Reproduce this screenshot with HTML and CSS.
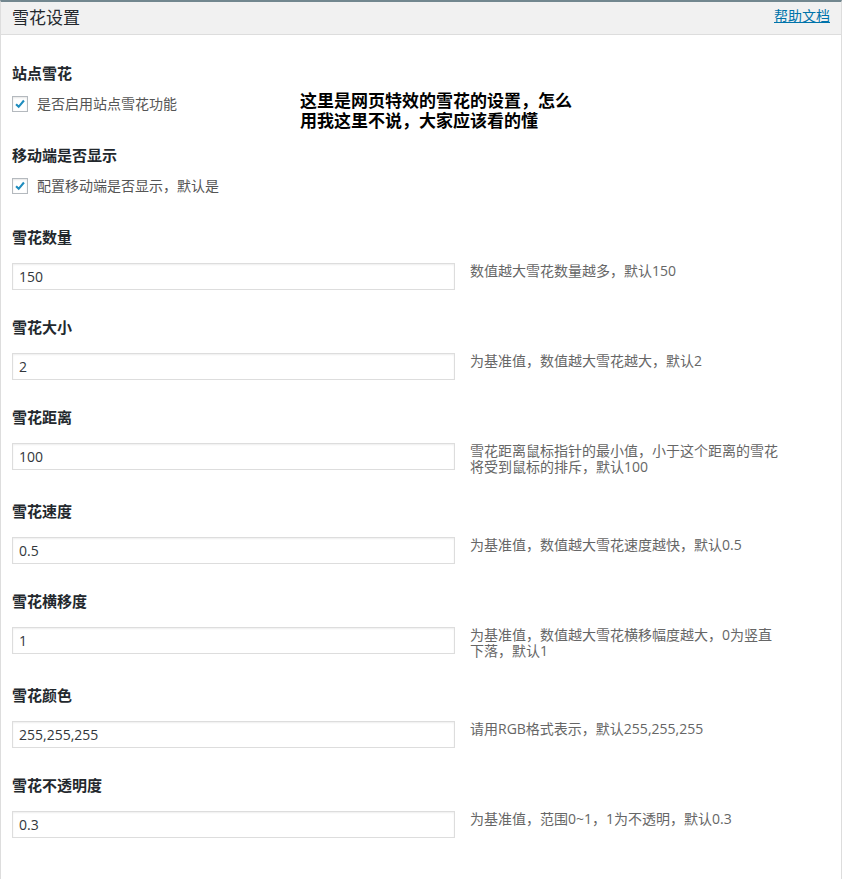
FILE: index.html
```html
<!DOCTYPE html>
<html lang="zh-CN">

<head>
    <meta charset="UTF-8" />
    <meta name="viewport" content="width=device-width, initial-scale=1.0" />
    <title>雪花设置</title>
    <link rel="stylesheet" href="styles.css">
</head>

<body>
    <div class="panel">
        <div class="panel_head">
            <h2 class="panel_title">雪花设置</h2>
            <a class="help_link" href="#">帮助文档</a>
        </div>
        <div class="panel_body">
            <div class="field check_field">
                <div class="field_label">站点雪花</div>
                <label class="check_row"><span class="check_box"><svg viewBox="0 0 16 16" width="14" height="14"><path d="M3.5 8.2 L6.5 11.2 L12.5 4" fill="none" stroke="#1e8cbe" stroke-width="2.4"/></svg></span>是否启用站点雪花功能</label>
            </div>
            <div class="field check_field">
                <div class="field_label">移动端是否显示</div>
                <label class="check_row"><span class="check_box"><svg viewBox="0 0 16 16" width="14" height="14"><path d="M3.5 8.2 L6.5 11.2 L12.5 4" fill="none" stroke="#1e8cbe" stroke-width="2.4"/></svg></span>配置移动端是否显示，默认是</label>
            </div>
            <div class="field">
                <div class="field_label">雪花数量</div>
                <div class="control">
                    <input class="text_input" type="text" value="150">
                    <p class="desc">数值越大雪花数量越多，默认150</p>
                </div>
            </div>
            <div class="field">
                <div class="field_label">雪花大小</div>
                <div class="control">
                    <input class="text_input" type="text" value="2">
                    <p class="desc">为基准值，数值越大雪花越大，默认2</p>
                </div>
            </div>
            <div class="field">
                <div class="field_label">雪花距离</div>
                <div class="control">
                    <input class="text_input" type="text" value="100">
                    <p class="desc">雪花距离鼠标指针的最小值，小于这个距离的雪花将受到鼠标的排斥，默认100</p>
                </div>
            </div>
            <div class="field">
                <div class="field_label">雪花速度</div>
                <div class="control">
                    <input class="text_input" type="text" value="0.5">
                    <p class="desc">为基准值，数值越大雪花速度越快，默认0.5</p>
                </div>
            </div>
            <div class="field">
                <div class="field_label">雪花横移度</div>
                <div class="control">
                    <input class="text_input" type="text" value="1">
                    <p class="desc">为基准值，数值越大雪花横移幅度越大，0为竖直下落，默认1</p>
                </div>
            </div>
            <div class="field">
                <div class="field_label">雪花颜色</div>
                <div class="control">
                    <input class="text_input" type="text" value="255,255,255">
                    <p class="desc">请用RGB格式表示，默认255,255,255</p>
                </div>
            </div>
            <div class="field">
                <div class="field_label">雪花不透明度</div>
                <div class="control">
                    <input class="text_input" type="text" value="0.3">
                    <p class="desc">为基准值，范围0~1，1为不透明，默认0.3</p>
                </div>
            </div>
        </div>
        <div class="note">这里是网页特效的雪花的设置，怎么<br>用我这里不说，大家应该看的懂</div>
    </div>
</body>

</html>
```

FILE: styles.css
```css
html,
body {
    padding: 0;
    margin: 0;
    background: #fff;
}

body {
    font-family: "Open Sans", "Noto Sans CJK SC", sans-serif;
    font-size: 14px;
    color: #444;
}

.panel {
    position: relative;
    width: 840px;
    border: 1px solid #ddd;
    border-top: 2px solid #72878f;
}

.panel_head {
    height: 32px;
    display: flex;
    justify-content: space-between;
    align-items: center;
    padding: 0 11px;
    background: #f1f1f1;
    border-bottom: 1px solid #ddd;
}

.panel_title {
    margin: 0;
    font-size: 17px;
    font-weight: normal;
    color: #23282d;
    line-height: 22px;
}

.help_link {
    color: #0073aa;
    font-size: 14px;
    line-height: 20px;
    margin-top: -4px;
}

.panel_body {
    padding: 28px 11px 14px;
}

.field {
    margin-bottom: 26px;
}

.check_field {
    display: flex;
    flex-direction: column;
    align-items: flex-start;
    margin-bottom: 31px;
}

.field_label {
    font-size: 15px;
    font-weight: bold;
    color: #23282d;
    line-height: 20px;
    margin-bottom: 16px;
}

.check_field .field_label {
    margin-bottom: 11px;
}

.check_row {
    display: flex;
    align-items: center;
    gap: 9px;
    line-height: 20px;
    color: #555;
}

.check_box {
    width: 14px;
    height: 14px;
    border: 1px solid #b4b9be;
    box-shadow: inset 0 1px 2px rgba(0, 0, 0, 0.1);
    display: flex;
    align-items: center;
    justify-content: center;
    background: #fff;
}

.control {
    display: flex;
    align-items: flex-start;
    gap: 15px;
    min-height: 28px;
}

.text_input {
    box-sizing: border-box;
    width: 443px;
    height: 27px;
    margin: 0;
    padding: 0 6px;
    border: 1px solid #ddd;
    box-shadow: inset 0 1px 2px rgba(0, 0, 0, 0.07);
    font-family: "Open Sans", "Noto Sans CJK SC", sans-serif;
    font-size: 14px;
    color: #32373c;
    outline: none;
}

.desc {
    margin: 0;
    width: 315px;
    line-height: 16px;
    color: #666;
}

.note {
    position: absolute;
    left: 299px;
    top: 89px;
    font-size: 17px;
    font-weight: bold;
    line-height: 20px;
    color: #000;
}
```
